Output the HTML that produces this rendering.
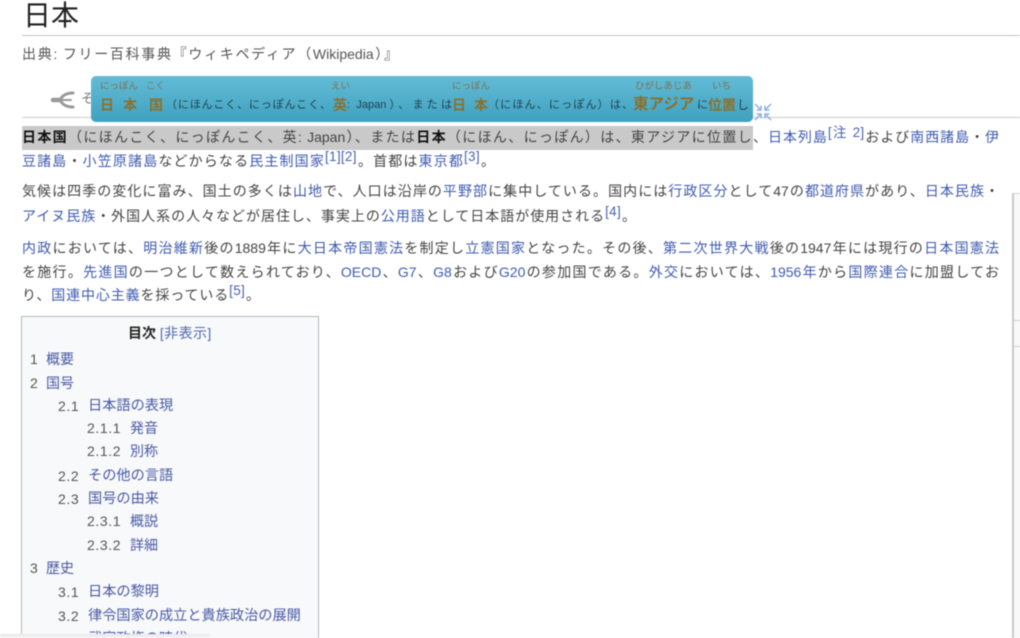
<!DOCTYPE html>
<html lang="ja"><head><meta charset="utf-8"><title>日本</title>
<style>
html,body{margin:0;padding:0;background:#fff;}
body{width:1020px;height:638px;overflow:hidden;position:relative;font-family:"Liberation Sans","Noto Sans CJK JP",sans-serif;color:#444;}
#w{position:absolute;left:0;top:0;width:1020px;height:638px;overflow:hidden;filter:blur(.6px);}
.a{position:absolute;}
.l{position:absolute;height:24px;line-height:24px;font-size:14px;text-align:justify;text-align-last:justify;}
.n{position:absolute;height:24px;line-height:24px;font-size:14px;white-space:nowrap;}
a{color:#3f5bb0;}
sup{font-size:13.5px;line-height:0;vertical-align:5px;color:#4a62b0;letter-spacing:.3px;}
.t{color:#4a5aa5;}
.num{color:#555;letter-spacing:.6px;}
.k{position:absolute;top:95px;height:20px;line-height:20px;font-size:14px;font-weight:bold;color:#8c6f2c;white-space:nowrap;}
.r{position:absolute;top:80px;height:14px;line-height:14px;font-size:9.5px;color:#7d7050;white-space:nowrap;}
.s{position:absolute;top:95px;height:20px;line-height:20px;font-size:11px;color:#20404f;white-space:nowrap;}
</style></head><body><div id="w">

<div class="a" style="left:23px;top:-3px;font-size:28px;line-height:38px;color:#222;">日本</div>
<div class="a" style="left:22px;top:35px;width:998px;height:1px;background:#c4c8cc;"></div>
<div class="l" style="left:22px;top:42px;width:376px;color:#555;">出典: フリー百科事典『ウィキペディア（Wikipedia）』</div>

<svg class="a" style="left:50px;top:88px;" width="26" height="24" viewBox="0 0 26 24" fill="none" stroke="#9a9a9a" stroke-linecap="round">
<path d="M3 12 L11 12" stroke-width="4.5"/><path d="M10 12 C13 6 18 5 23 5" stroke-width="3"/><path d="M10 12 C13 18 18 19 23 19" stroke-width="3"/><path d="M13 12 L21 12" stroke-width="2"/></svg>
<div class="a" style="left:81px;top:87px;font-size:13px;line-height:24px;color:#777;">そ</div>
<div class="a" style="left:22px;top:117px;width:998px;height:1px;background:#c8ccd0;"></div>

<div class="a" style="left:22px;top:126px;width:731px;height:24px;background:#c9c9c9;"></div>

<div class="l" style="left:22px;top:125px;width:745px;"><b style="color:#111">日本国</b>（にほんこく、にっぽんこく、英: Japan）、または<b style="color:#111">日本</b>（にほん、にっぽん）は、東アジアに位置し、</div>
<div class="l" style="left:768px;top:125px;width:231px;"><a>日本列島</a><sup>[注 2]</sup>および<a>南西諸島</a>・<a>伊</a></div>
<div class="l" style="left:22px;top:149px;width:473px;"><a>豆諸島</a>・<a>小笠原諸島</a>などからなる<a>民主制国家</a><sup>[1][2]</sup>。首都は<a>東京都</a><sup>[3]</sup>。</div>
<div class="l" style="left:22px;top:179px;width:977px;">気候は四季の変化に富み、国土の多くは<a>山地</a>で、人口は沿岸の<a>平野部</a>に集中している。国内には<a>行政区分</a>として47の<a>都道府県</a>があり、<a>日本民族</a>・</div>
<div class="l" style="left:22px;top:204px;width:614px;"><a>アイヌ民族</a>・外国人系の人々などが居住し、事実上の<a>公用語</a>として日本語が使用される<sup>[4]</sup>。</div>
<div class="l" style="left:22px;top:236px;width:977px;"><a>内政</a>においては、<a>明治維新</a>後の1889年に<a>大日本帝国憲法</a>を制定し<a>立憲国家</a>となった。その後、<a>第二次世界大戦</a>後の1947年には現行の<a>日本国憲法</a></div>
<div class="l" style="left:22px;top:260px;width:977px;">を施行。<a>先進国</a>の一つとして数えられており、<a>OECD</a>、<a>G7</a>、<a>G8</a>および<a>G20</a>の参加国である。<a>外交</a>においては、<a>1956年</a>から<a>国際連合</a>に加盟してお</div>
<div class="l" style="left:22px;top:283px;width:238px;">り、<a>国連中心主義</a>を採っている<sup>[5]</sup>。</div>

<div class="a" style="left:21px;top:316px;width:296px;height:330px;background:#f8f9fa;border:1px solid #b4b9bf;"></div>
<div class="n" style="left:128px;top:321px;color:#222;"><b>目次</b> <a style="color:#5068b0;letter-spacing:.4px;">[非表示]</a></div>

<div class="n num" style="left:30px;top:347px;">1</div><div class="n t" style="left:46px;top:347px;">概要</div>
<div class="n num" style="left:30px;top:371px;">2</div><div class="n t" style="left:46px;top:371px;">国号</div>
<div class="n num" style="left:58px;top:394px;">2.1</div><div class="n t" style="left:88px;top:394px;font-size:14.2px;">日本語の表現</div>
<div class="n num" style="left:87px;top:416px;">2.1.1</div><div class="n t" style="left:130px;top:416px;">発音</div>
<div class="n num" style="left:87px;top:439px;">2.1.2</div><div class="n t" style="left:130px;top:439px;">別称</div>
<div class="n num" style="left:58px;top:464px;">2.2</div><div class="n t" style="left:88px;top:464px;font-size:14.2px;">その他の言語</div>
<div class="n num" style="left:58px;top:487px;">2.3</div><div class="n t" style="left:88px;top:487px;font-size:14.2px;">国号の由来</div>
<div class="n num" style="left:87px;top:509px;">2.3.1</div><div class="n t" style="left:130px;top:509px;">概説</div>
<div class="n num" style="left:87px;top:533px;">2.3.2</div><div class="n t" style="left:130px;top:533px;">詳細</div>
<div class="n num" style="left:30px;top:556px;">3</div><div class="n t" style="left:46px;top:556px;">歴史</div>
<div class="n num" style="left:58px;top:580px;">3.1</div><div class="n t" style="left:88px;top:580px;font-size:14.2px;">日本の黎明</div>
<div class="n num" style="left:58px;top:604px;">3.2</div><div class="n t" style="left:88px;top:604px;font-size:14.2px;">律令国家の成立と貴族政治の展開</div>
<div class="n num" style="left:58px;top:627px;">3.3</div><div class="n t" style="left:88px;top:627px;font-size:14.2px;">武家政権の時代</div>
<div class="a" style="left:0;top:634px;width:210px;height:4px;background:linear-gradient(#e8e8e8,#f6f6f6);"></div>

<div class="a" style="left:1012px;top:193px;width:8px;height:445px;background:#f9f9f9;border-left:2px solid #c9c9c9;border-top:1px solid #d4d4d4;box-sizing:border-box;"></div>
<div class="a" style="left:1012px;top:320px;width:8px;height:1px;background:#ccc;"></div>
<div class="a" style="left:1012px;top:346px;width:8px;height:1px;background:#ccc;"></div>

<div class="a" style="left:91px;top:76px;width:662px;height:46px;border-radius:5px;background:linear-gradient(#63bcd6,#3fa1bf);"></div>
<div class="r" style="left:100px;">にっぽん</div><div class="r" style="left:146px;">こく</div>
<div class="r" style="left:331px;">えい</div><div class="r" style="left:452px;">にっぽん</div>
<div class="r" style="left:635px;">ひがしあじあ</div><div class="r" style="left:712px;">いち</div>
<div class="k" style="left:100px;">日</div><div class="k" style="left:123px;">本</div><div class="k" style="left:149px;">国</div>
<div class="s" style="left:166px;width:165px;text-align:justify;text-align-last:justify;">（にほんこく、にっぽんこく、</div>
<div class="k" style="left:333px;">英</div>
<div class="s" style="left:347px;width:105px;text-align:justify;text-align-last:justify;">: Japan）、または</div>
<div class="k" style="left:452px;">日</div><div class="k" style="left:474px;">本</div>
<div class="s" style="left:488px;width:145px;text-align:justify;text-align-last:justify;">（にほん、にっぽん）は、</div>
<div class="k" style="left:633px;font-size:15.5px;">東アジア</div>
<div class="s" style="left:697px;">に</div>
<div class="k" style="left:708px;">位置</div>
<div class="s" style="left:737px;font-size:12px;">し</div>

<svg class="a" style="left:753px;top:102px;" width="20" height="20" viewBox="0 0 20 20" fill="none" stroke="#8fb0e6" stroke-width="1.5">
<path d="M2 2 L8 8 M3.500 8 H8 V3.500"/><path d="M18 2 L12 8 M16.500 8 H12 V3.500"/><path d="M2 18 L8 12 M3.500 12 H8 V16.500"/><path d="M18 18 L12 12 M16.500 12 H12 V16.500"/></svg>

</div></body></html>
